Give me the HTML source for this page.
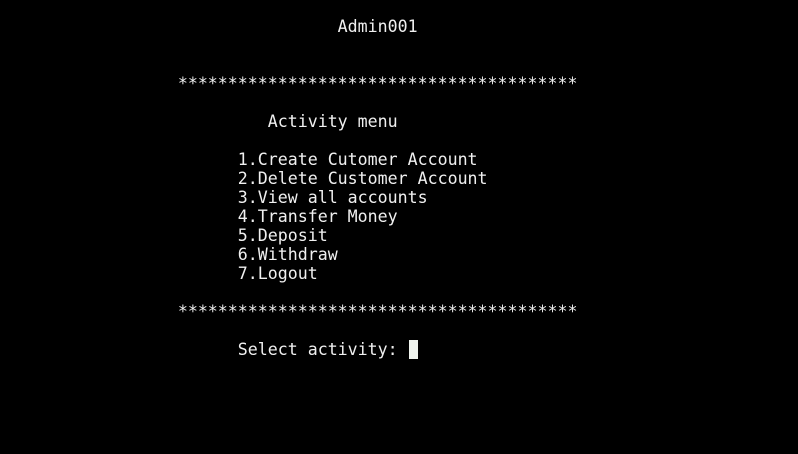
<!DOCTYPE html>
<html><head><style>
html,body{margin:0;padding:0;background:#000;width:798px;height:454px;overflow:hidden}
.l{position:absolute;left:8px;font-family:"DejaVu Sans Mono","Liberation Mono",monospace;font-size:16.6px;line-height:19px;color:#f0f0f0;white-space:pre}
.c{position:absolute;left:409px;top:340px;width:9px;height:19px;background:#f0f4ee}
</style></head><body>
<div class="l" style="top:17px">                                 Admin001</div>
<div class="l" style="top:74px">                 ****************************************</div>
<div class="l" style="top:112px">                          Activity menu</div>
<div class="l" style="top:150px">                       1.Create Cutomer Account</div>
<div class="l" style="top:169px">                       2.Delete Customer Account</div>
<div class="l" style="top:188px">                       3.View all accounts</div>
<div class="l" style="top:207px">                       4.Transfer Money</div>
<div class="l" style="top:226px">                       5.Deposit</div>
<div class="l" style="top:245px">                       6.Withdraw</div>
<div class="l" style="top:264px">                       7.Logout</div>
<div class="l" style="top:302px">                 ****************************************</div>
<div class="l" style="top:340px">                       Select activity: </div>
<div class="c"></div>
</body></html>
